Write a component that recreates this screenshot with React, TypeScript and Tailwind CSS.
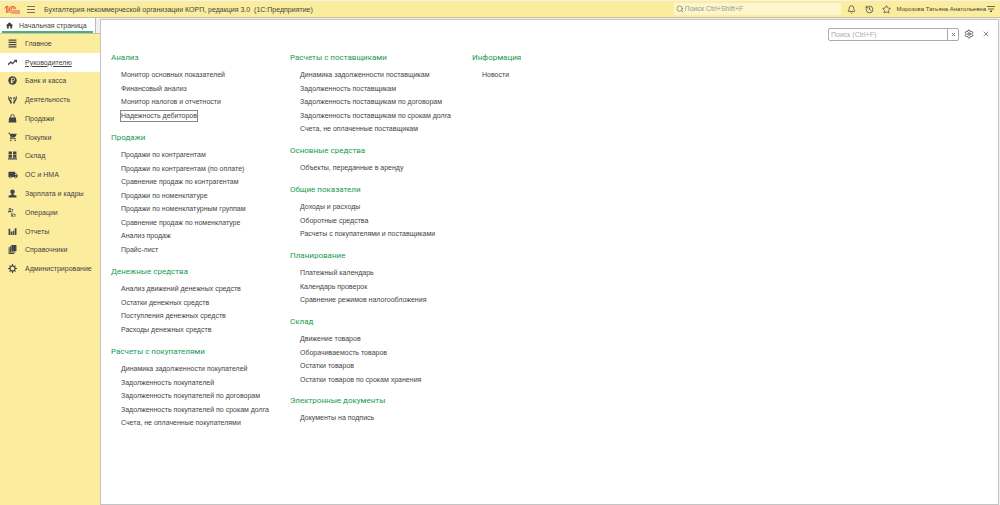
import type { ReactNode } from "react";
import { MdHome, MdLocalShipping, MdShoppingCart } from "react-icons/md";
import { Bell, History, Search, Settings, Star, X } from "lucide-react";

type Group = { title: string; items: string[] };

const columns: { className: string; groups: Group[] }[] = [
  {
    className: "w-[179px] gap-[10px]",
    groups: [
      {
        title: "Анализ",
        items: [
          "Монитор основных показателей",
          "Финансовый анализ",
          "Монитор налогов и отчетности",
          "Надежность дебиторов",
        ],
      },
      {
        title: "Продажи",
        items: [
          "Продажи по контрагентам",
          "Продажи по контрагентам (по оплате)",
          "Сравнение продаж по контрагентам",
          "Продажи по номенклатуре",
          "Продажи по номенклатурным группам",
          "Сравнение продаж по номенклатуре",
          "Анализ продаж",
          "Прайс-лист",
        ],
      },
      {
        title: "Денежные средства",
        items: [
          "Анализ движений денежных средств",
          "Остатки денежных средств",
          "Поступления денежных средств",
          "Расходы денежных средств",
        ],
      },
      {
        title: "Расчеты с покупателями",
        items: [
          "Динамика задолженности покупателей",
          "Задолженность покупателей",
          "Задолженность покупателей по договорам",
          "Задолженность покупателей по срокам долга",
          "Счета, не оплаченные покупателями",
        ],
      },
    ],
  },
  {
    className: "w-[182px] gap-[9px]",
    groups: [
      {
        title: "Расчеты с поставщиками",
        items: [
          "Динамика задолженности поставщикам",
          "Задолженность поставщикам",
          "Задолженность поставщикам по договорам",
          "Задолженность поставщикам по срокам долга",
          "Счета, не оплаченные поставщикам",
        ],
      },
      { title: "Основные средства", items: ["Объекты, переданные в аренду"] },
      {
        title: "Общие показатели",
        items: [
          "Доходы и расходы",
          "Оборотные средства",
          "Расчеты с покупателями и поставщиками",
        ],
      },
      {
        title: "Планирование",
        items: [
          "Платежный календарь",
          "Календарь проверок",
          "Сравнение режимов налогообложения",
        ],
      },
      {
        title: "Склад",
        items: [
          "Движение товаров",
          "Оборачиваемость товаров",
          "Остатки товаров",
          "Остатки товаров по срокам хранения",
        ],
      },
      { title: "Электронные документы", items: ["Документы на подпись"] },
    ],
  },
  {
    className: "w-[120px] gap-[9px]",
    groups: [{ title: "Информация", items: ["Новости"] }],
  },
];

function Glyph({ children }: { children: ReactNode }) {
  return (
    <svg viewBox="0 0 16 16" className="size-[9px]" fill="currentColor" aria-hidden="true">
      {children}
    </svg>
  );
}

const sections: { label: string; icon: ReactNode }[] = [
  {
    label: "Главное",
    icon: (
      <Glyph>
        <path d="M1 1h14v2H1zM1 5h14v2H1zM1 9h14v2H1zM1 13h14v2H1z" />
      </Glyph>
    ),
  },
  {
    label: "Руководителю",
    icon: (
      <Glyph>
        <path d="M0 12l5-5 3 3 5-5" fill="none" stroke="currentColor" strokeWidth="2.4" />
        <path d="M10 3h6v6z" />
      </Glyph>
    ),
  },
  {
    label: "Банк и касса",
    icon: (
      <Glyph>
        <circle cx="8" cy="8" r="7.5" />
        <path d="M6.5 13V4h2.7a2.3 2.3 0 0 1 0 4.8H4.8M4.8 11h4.4" fill="none" stroke="#fbec9e" strokeWidth="1.6" />
      </Glyph>
    ),
  },
  {
    label: "Деятельность",
    icon: (
      <Glyph>
        <path d="M0 2l2 1 1 4 3 3 1 5H4l-1-4-2-2zM16 2l-2 1-1 4-3 3-1 5h3l1-4 2-2zM4 3l2 1 1 3-1 1-2-2zM12 3l-2 1-1 3 1 1 2-2z" />
      </Glyph>
    ),
  },
  {
    label: "Продажи",
    icon: (
      <Glyph>
        <path d="M2 6h12l1 9H1z" />
        <path d="M5 8V4a3 3 0 0 1 6 0v4" fill="none" stroke="currentColor" strokeWidth="1.6" />
      </Glyph>
    ),
  },
  { label: "Покупки", icon: <MdShoppingCart className="size-[10px]" /> },
  {
    label: "Склад",
    icon: (
      <Glyph>
        <path d="M1 1h6v5H1zM9 1h6v5H9zM1 7h6v5H1zM9 7h6v5H9zM0 13h16v2H0z" />
      </Glyph>
    ),
  },
  { label: "ОС и НМА", icon: <MdLocalShipping className="size-[10px]" /> },
  {
    label: "Зарплата и кадры",
    icon: (
      <Glyph>
        <circle cx="8" cy="5" r="4" />
        <path d="M6 8h4v2l5 2v3H1v-3l5-2z" />
      </Glyph>
    ),
  },
  {
    label: "Операции",
    icon: (
      <svg viewBox="0 0 18 18" className="size-[9px]" fill="currentColor" aria-hidden="true">
        <text x="0" y="8" fontSize="9" fontWeight="700">Дт</text>
        <text x="6" y="17" fontSize="9" fontWeight="700">Кт</text>
      </svg>
    ),
  },
  {
    label: "Отчеты",
    icon: (
      <Glyph>
        <path d="M1 3h3v11H1zM5 8h3v6H5zM9 6h2v8H9zM12 2h3v12h-3z" />
      </Glyph>
    ),
  },
  {
    label: "Справочники",
    icon: (
      <Glyph>
        <path d="M6 0h9v11H6z" />
        <path d="M4.5 2v10.5H13M2 4v11h9" fill="none" stroke="currentColor" strokeWidth="1.8" />
      </Glyph>
    ),
  },
  {
    label: "Администрирование",
    icon: (
      <Glyph>
        <circle cx="8" cy="8" r="4.5" fill="none" stroke="currentColor" strokeWidth="2" />
        <path d="M7 0h2v4H7zM7 12h2v4H7zM0 7h4v2H0zM12 7h4v2h-4zM2 3.4L3.4 2l2.5 2.5-1.4 1.4zM10.1 11.5l1.4-1.4L14 12.6 12.6 14zM2 12.6l2.5-2.5 1.4 1.4L3.4 14zM10.1 4.5L12.6 2 14 3.4l-2.5 2.5z" />
      </Glyph>
    ),
  },
];

function Logo() {
  return (
    <svg viewBox="0 0 48 27" className="h-[9px] w-4" fill="none" stroke="#e3402f" strokeWidth="2.6" aria-label="1С">
      <path d="M1 10l7-6v20M8 4h4v20" />
      <path d="M36 12A10 10 0 1 0 26 24h22" />
      <path d="M31 13A5 5 0 1 0 26 18h22" />
    </svg>
  );
}

function Header() {
  return (
    <header className="flex h-[18px] shrink-0 items-center border-b border-t border-b-[#c9c2a0] border-t-[#f5f3e6] bg-[#fbec9e] pl-1 pr-[5px]">
      <Logo />
      <button aria-label="Меню" className="ml-[7px]">
        <svg viewBox="0 0 8 8" className="size-2" stroke="#555" aria-hidden="true">
          <path d="M0 1.5h8M0 4.5h8M0 7.5h8" strokeWidth="0.8" />
        </svg>
      </button>
      <h1 className="ml-[9px] whitespace-pre text-[7px]">
        Бухгалтерия некоммерческой организации КОРП, редакция 3.0  (1С:Предприятие)
      </h1>
      <label className="ml-auto flex h-3 w-[167px] items-center bg-[#fdf6cc] pl-0.5">
        <Search className="size-2 text-[#666]" strokeWidth={2} />
        <input
          type="search"
          aria-label="Глобальный поиск"
          placeholder="Поиск Ctrl+Shift+F"
          className="ml-px min-w-0 flex-1 bg-transparent text-[7px] leading-3 outline-none placeholder:text-[#999]"
        />
      </label>
      <button aria-label="Уведомления" className="ml-[6px]">
        <Bell className="size-[9px]" />
      </button>
      <button aria-label="История" className="ml-[9px]">
        <History className="size-[9px]" />
      </button>
      <button aria-label="Избранное" className="ml-[8px]">
        <Star className="size-[9px]" />
      </button>
      <button className="ml-[6px] whitespace-nowrap text-[6px]">
        Морозова Татьяна Анатольевна
      </button>
      <button aria-label="Настройки окна" className="ml-px">
        <svg viewBox="0 0 8 8" className="size-2" stroke="#444" strokeWidth="0.8" aria-hidden="true">
          <path d="M0 1.5h8M1 4h6" />
          <path d="M3 6h2L4 7z" fill="#444" />
        </svg>
      </button>
    </header>
  );
}

function Sidebar() {
  return (
    <aside className="flex w-[100px] shrink-0 flex-col bg-[#fbec9e]">
      <div className="flex h-4 shrink-0 border-b border-[#c9c2a0] bg-[#f0f0f0]">
        <button className="flex h-[15px] w-[96px] items-center border-r border-[#bbb] bg-white px-0.5">
          <span className="flex h-full flex-1 items-center border-b-2 border-[#42b37a] pl-[3px] pt-0.5">
            <MdHome className="size-[9px]" />
            <span className="ml-[5px] whitespace-nowrap text-[7px]">Начальная страница</span>
          </span>
        </button>
      </div>
      <nav className="grid h-[244px] shrink-0 auto-rows-fr">
        {sections.map(({ label, icon }) => (
          <a
            key={label}
            href="#"
            className={
              label === "Руководителю"
                ? "flex items-center bg-white pl-2 underline"
                : "flex items-center pl-2"
            }
          >
            <span className="flex w-[17px] items-center">{icon}</span>
            <span className="whitespace-nowrap text-[7px]">{label}</span>
          </a>
        ))}
      </nav>
    </aside>
  );
}

function MenuGroup({ title, items }: Group) {
  return (
    <section>
      <h2 className="mb-1 font-['Roboto',sans-serif] text-[8px] leading-3 text-[#169b50]">{title}</h2>
      <ul className="pl-[9px] text-[7px]">
        {items.map((item) => (
          <li key={item} className="flex items-center odd:h-[14px] even:h-[13px]">
            <a
              href="#"
              className={
                item === "Надежность дебиторов"
                  ? "whitespace-nowrap border border-[#888] leading-[10px]"
                  : "whitespace-nowrap border border-transparent leading-[10px]"
              }
            >
              {item}
            </a>
          </li>
        ))}
      </ul>
    </section>
  );
}

export default function App() {
  return (
    <div className="flex min-h-screen flex-col bg-[#f0f0f0] font-['Liberation_Sans',Arial,sans-serif] leading-none text-[#444]">
      <Header />
      <div className="flex flex-1">
        <Sidebar />
        <main className="mr-px mt-px flex-1 border border-[#c4c4c4] bg-white">
          <div className="flex h-7 items-center justify-end pr-2">
            <div className="flex h-[13px] w-[131px] rounded-xs border border-[#aaa]">
              <input
                type="search"
                aria-label="Поиск"
                placeholder="Поиск (Ctrl+F)"
                className="min-w-0 flex-1 pl-0.5 text-[7px] outline-none placeholder:text-[#aaa]"
              />
              <button aria-label="Очистить" className="flex w-[11px] items-center justify-center border-l border-[#aaa]">
                <X className="size-[5px]" strokeWidth={3} />
              </button>
            </div>
            <button aria-label="Настройки" className="ml-[5px]">
              <Settings className="size-[10px]" />
            </button>
            <button aria-label="Закрыть" className="ml-2">
              <X className="size-2" />
            </button>
          </div>
          <div className="flex pl-[10px] pt-1">
            {columns.map(({ className, groups }, i) => (
              <div key={i} className={`flex shrink-0 flex-col ${className}`}>
                {groups.map((group) => (
                  <MenuGroup key={group.title} {...group} />
                ))}
              </div>
            ))}
          </div>
        </main>
      </div>
    </div>
  );
}
